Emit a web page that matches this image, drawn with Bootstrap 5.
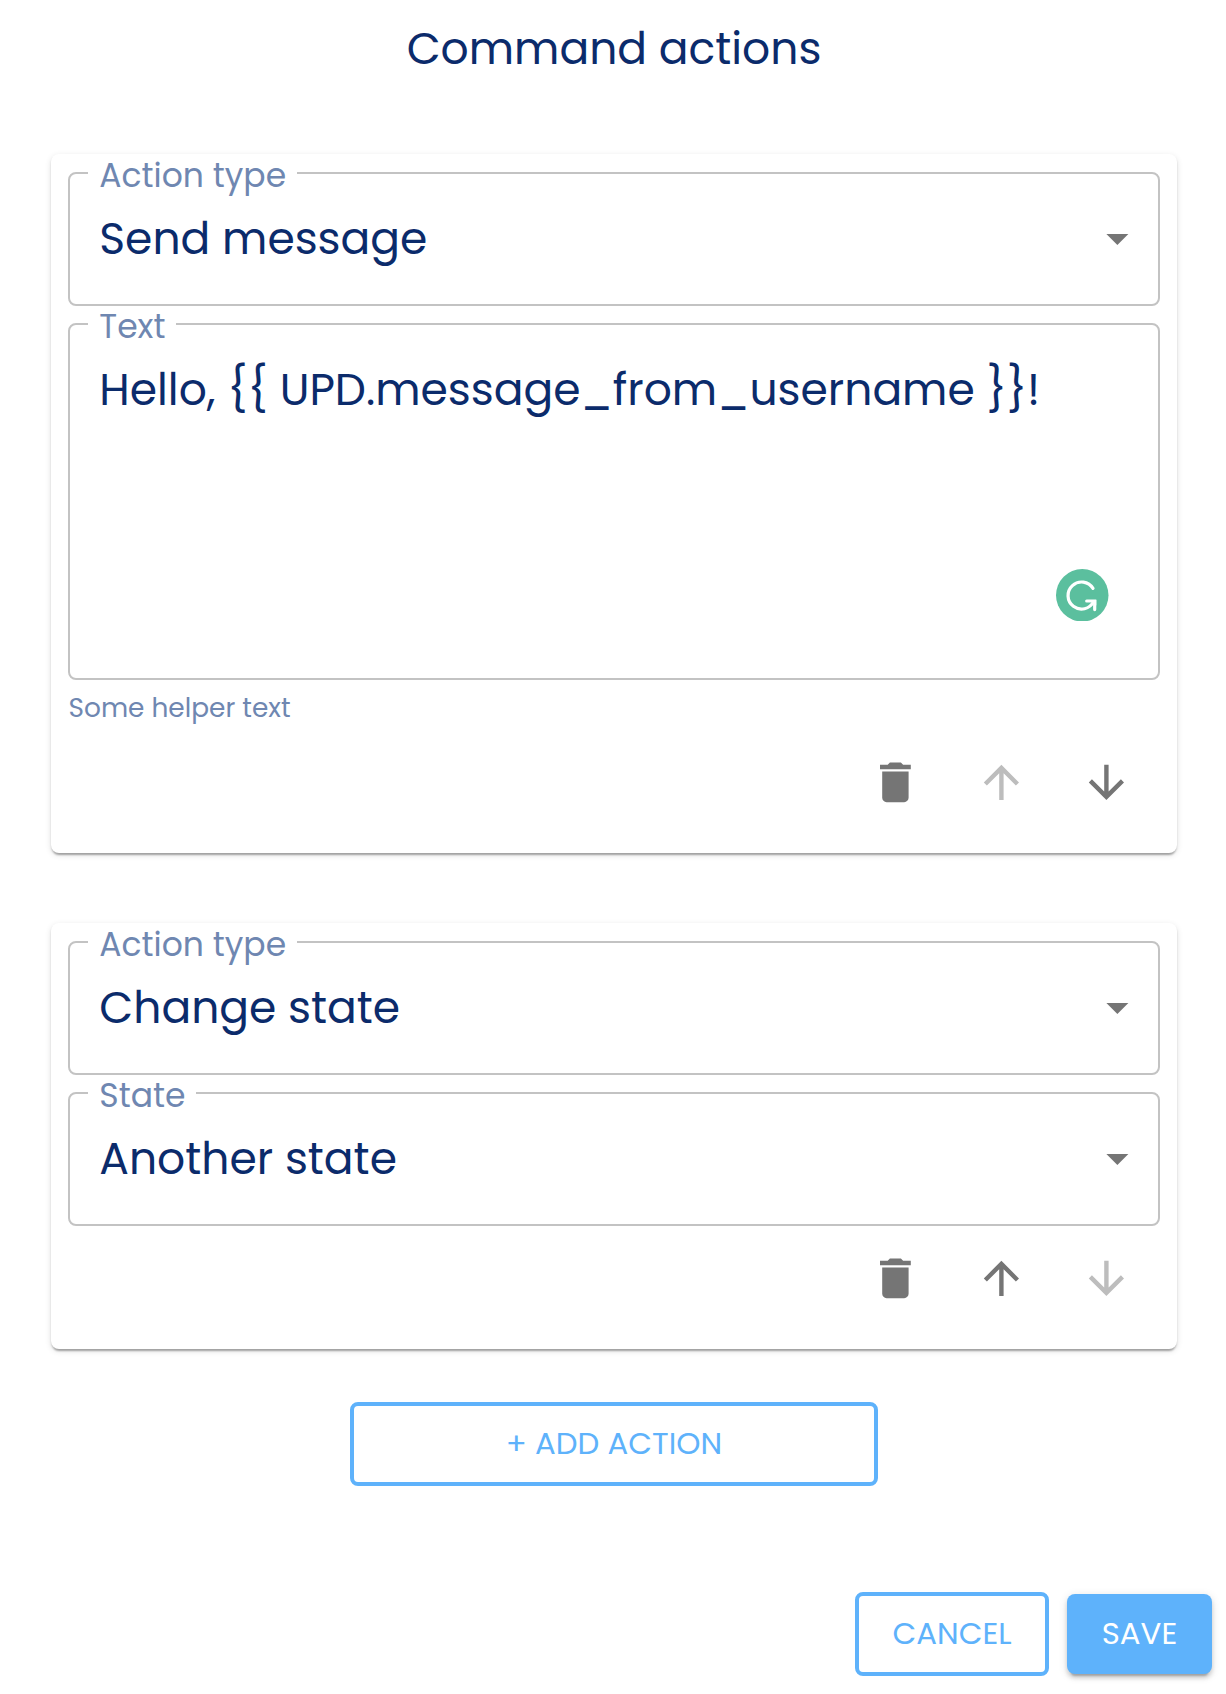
<!DOCTYPE html>
<html lang="en">
<head>
<meta charset="utf-8">
<meta name="viewport" content="width=device-width, initial-scale=1">
<title>Command actions</title>
<link href="https://cdn.jsdelivr.net/npm/bootstrap@5.3.0/dist/css/bootstrap.min.css" rel="stylesheet">
<style>
  body {
    font-family: Poppins, Inter, "Open Sans", sans-serif;
    color: #0b2b6b;
    background: #fff;
  }
  .page { padding: 19px 49px 0 51px; }
  .page-title { font-size: 44px; line-height: 60px; font-weight: 400; margin: 0 0 75px; }
  .action-card {
    border: 0;
    border-radius: 8px;
    padding: 18px 17px;
    box-shadow: 0 4px 2px -2px rgba(0,0,0,.2), 0 2px 2px rgba(0,0,0,.14), 0 2px 6px rgba(0,0,0,.12);
  }
  .action-list { gap: 70px; }
  .field-stack { gap: 17px; }
  .outlined {
    height: 134px;
    border: 2px solid #c3c3c3;
    border-radius: 8px;
    padding: 35px 14px 0 29.3px;
  }
  .outlined-tall { height: 357px; }
  .outlined-label {
    position: absolute;
    top: -18px;
    left: 18px;
    padding: 0 10.5px 0 11.3px;
    font-size: 33px;
    line-height: 40px;
    color: #6f87b1;
    background: #fff;
    white-space: nowrap;
  }
  .outlined-value { font-size: 44px; line-height: 60px; white-space: nowrap; }
  .caret { width: 52.8px; height: 52.8px; margin-top: 3px; fill: #757575; }
  .helper { font-size: 26.4px; line-height: 36px; color: #6f87b1; padding: 10px 0 4px .5px; }
  .icon-row { padding-right: .8px; }
  .icon-action {
    width: 105.5px; height: 105px; padding: 0; border: 0; background: none;
    color: #757575; display: flex; align-items: center; justify-content: center;
  }
  .icon-action:disabled { color: #bdbdbd; }
  .icon-action svg { width: 52.8px; height: 52.8px; fill: currentColor; }
  .checker { position: absolute; left: 986px; top: 243.5px; width: 52.5px; height: 52.5px; }
  .action-btn {
    --bs-btn-color: #5eb2fb;
    --bs-btn-border-color: #5eb2fb;
    height: 84px;
    border-width: 4px;
    border-radius: 8px;
    font-size: 30.8px;
    line-height: 40px;
    padding: 0;
  }
  .add-btn { width: 528px; margin-top: 53px; }
  .cancel-btn { width: 194px; }
  .save-btn {
    --bs-btn-color: #fff;
    --bs-btn-bg: #5eb2fb;
    width: 145px; height: 80px; border: 0;
    box-shadow: 0 6px 2px -4px rgba(0,0,0,.2), 0 4px 4px rgba(0,0,0,.14), 0 2px 10px rgba(0,0,0,.12);
  }
  .dialog-actions { padding: 106px 14px 18px 0; gap: 18px; }
</style>
</head>
<body>
<svg class="d-none">
  <symbol id="i-drop" viewBox="0 0 24 24"><path d="M7 10l5 5 5-5z"/></symbol>
  <symbol id="i-delete" viewBox="0 0 24 24"><path d="M6 19c0 1.1.9 2 2 2h8c1.1 0 2-.9 2-2V7H6v12zM19 4h-3.5l-1-1h-5l-1 1H5v2h14V4z"/></symbol>
  <symbol id="i-up" viewBox="0 0 24 24"><path d="M4 12l1.41 1.41L11 7.83V20h2V7.83l5.58 5.59L20 12l-8-8-8 8z"/></symbol>
  <symbol id="i-down" viewBox="0 0 24 24"><path d="M20 12l-1.41-1.41L13 16.17V4h-2v12.17l-5.58-5.59L4 12l8 8 8-8z"/></symbol>
</svg>

<main class="page">
  <h1 class="page-title text-center">Command actions</h1>

  <div class="action-list d-flex flex-column">
    <section class="card action-card">
      <div class="field-stack d-flex flex-column">
        <div class="outlined position-relative d-flex justify-content-between align-items-start">
          <span class="outlined-label">Action type</span>
          <span class="outlined-value">Send message</span>
          <svg class="caret"><use href="#i-drop"/></svg>
        </div>
        <div class="outlined outlined-tall position-relative">
          <span class="outlined-label">Text</span>
          <span class="outlined-value d-block">Hello, {{ UPD.message_from_username }}!</span>
          <svg class="checker" viewBox="0 0 52.5 52.5">
            <circle cx="26.25" cy="26.25" r="26.25" fill="#5bbf9e"/>
            <g fill="none" stroke="#fff" stroke-width="3.2" stroke-linecap="round">
              <path d="M37 19.4A13.5 13.5 0 1 0 37.6 32.6"/>
              <path d="M30.7 32H38.7V40.6"/>
            </g>
            <path d="M35 31h5.3v5.5z" fill="#fff"/>
          </svg>
        </div>
      </div>
      <div class="helper">Some helper text</div>
      <div class="icon-row d-flex justify-content-end">
        <button class="icon-action" type="button" aria-label="Delete"><svg><use href="#i-delete"/></svg></button>
        <button class="icon-action" type="button" aria-label="Move up" disabled><svg><use href="#i-up"/></svg></button>
        <button class="icon-action" type="button" aria-label="Move down"><svg><use href="#i-down"/></svg></button>
      </div>
    </section>

    <section class="card action-card">
      <div class="field-stack d-flex flex-column">
        <div class="outlined position-relative d-flex justify-content-between align-items-start">
          <span class="outlined-label">Action type</span>
          <span class="outlined-value">Change state</span>
          <svg class="caret"><use href="#i-drop"/></svg>
        </div>
        <div class="outlined position-relative d-flex justify-content-between align-items-start">
          <span class="outlined-label">State</span>
          <span class="outlined-value">Another state</span>
          <svg class="caret"><use href="#i-drop"/></svg>
        </div>
      </div>
      <div class="icon-row d-flex justify-content-end">
        <button class="icon-action" type="button" aria-label="Delete"><svg><use href="#i-delete"/></svg></button>
        <button class="icon-action" type="button" aria-label="Move up"><svg><use href="#i-up"/></svg></button>
        <button class="icon-action" type="button" aria-label="Move down" disabled><svg><use href="#i-down"/></svg></button>
      </div>
    </section>
  </div>

  <div class="d-flex justify-content-center">
    <button class="btn action-btn add-btn" type="button">+ ADD ACTION</button>
  </div>
</main>

<footer class="dialog-actions d-flex justify-content-end align-items-center">
  <button class="btn action-btn cancel-btn" type="button">CANCEL</button>
  <button class="btn action-btn save-btn" type="button">SAVE</button>
</footer>
<script src="https://cdn.jsdelivr.net/npm/bootstrap@5.3.0/dist/js/bootstrap.bundle.min.js"></script>
</body>
</html>
